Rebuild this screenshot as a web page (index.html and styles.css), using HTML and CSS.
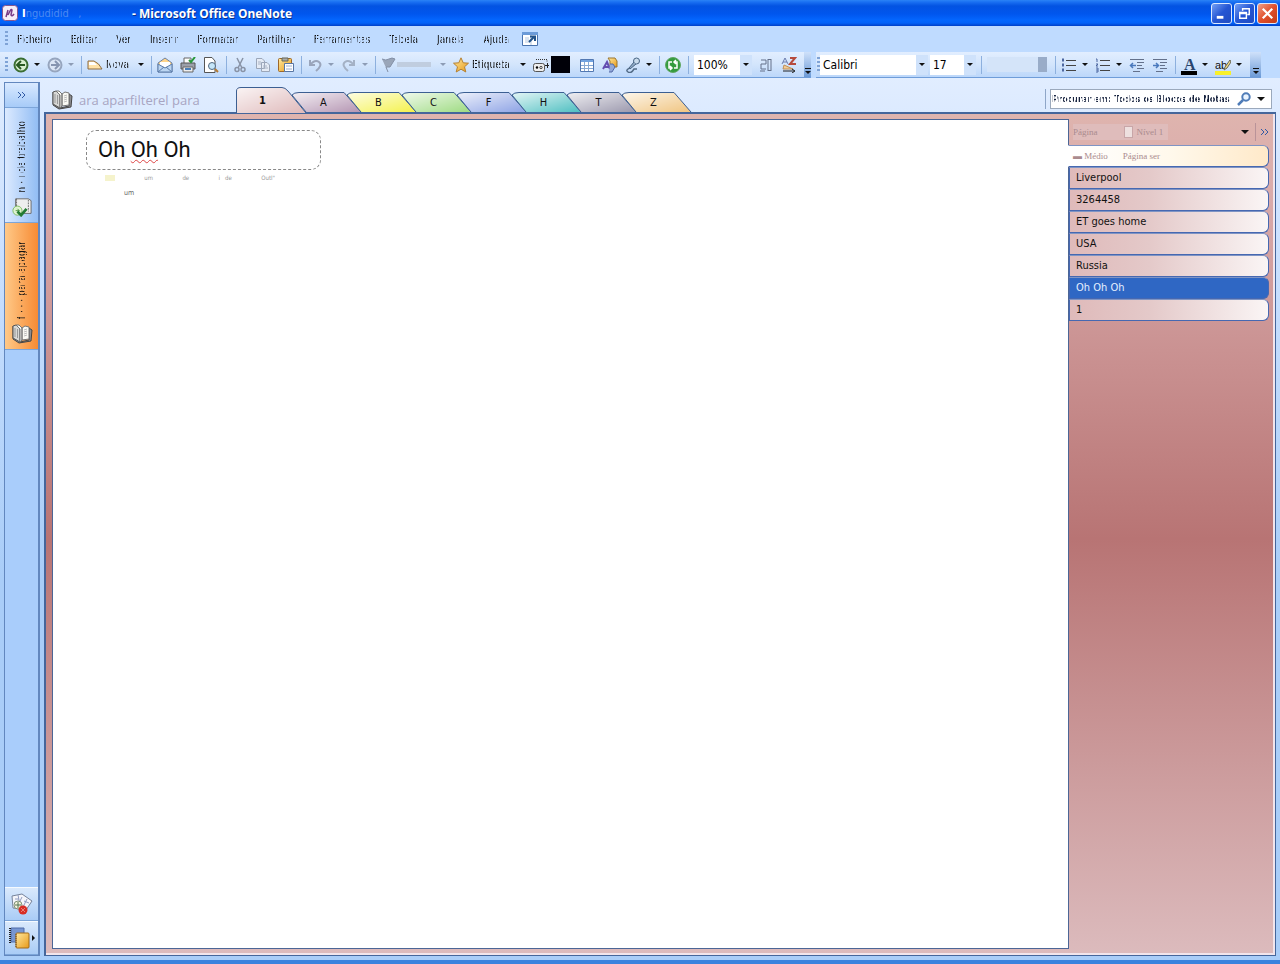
FILE: index.html
```html
<!DOCTYPE html>
<html lang="pt">
<head>
  <meta charset="UTF-8" />
  <meta name="viewport" content="width=device-width, initial-scale=1" />
  <title>Microsoft Office OneNote</title>
  <link rel="stylesheet" href="styles.css">
</head>
<body>

  <!-- shared icons -->
  <svg class="sprite" aria-hidden="true">
    <defs>
      <linearGradient id="shine" x1="0" y1="0" x2="1" y2="1">
        <stop offset="0" stop-color="#fff" stop-opacity=".85" />
        <stop offset="1" stop-color="#fff" stop-opacity="0" />
      </linearGradient>
      <linearGradient id="gold" x1="0" y1="0" x2="1" y2="1">
        <stop offset="0" stop-color="#ffe9a0" />
        <stop offset="1" stop-color="#e89a18" />
      </linearGradient>
    </defs>
    <symbol id="tab" viewBox="0 0 71 20">
      <path d="M15 20 1 3Q3 .5 8 .5H53L70 20Z" fill="var(--tab)" />
      <path d="M15 20 1 3Q3 .5 8 .5H53L70 20" fill="url(#shine)" stroke="#3c5f92" />
    </symbol>
    <symbol id="book" viewBox="0 0 22 20">
      <path d="M2 2V15L8 19 20 17 21 6 18 4V16L9 18" fill="#8d8d90" stroke="#444" />
      <path d="M2 2 5 1 9 5V18L2 14Z" fill="#d8d8d6" stroke="#555" />
      <path d="M5 1 9 5V18L11 16V4L8 1ZM11 4 14 2 18 3V15L11 16Z" fill="#fafaf4" stroke="#777" />
      <path d="M13 6 16 5M13 8 16 7M13 10 16 9M13 12 16 11" stroke="#bbb" />
      <path d="M4 4V13M6.500 5V14" stroke="#999" />
    </symbol>
  </svg>

  <header class="titlebar">
    <svg class="logo" viewBox="0 0 16 16"><rect width="15" height="15" x=".5" y=".5" rx="3" fill="#f5eef8" stroke="#88588e" /><path d="M4 12 6 5M6 10Q9 3 10 5L9 10Q10 12 12 9" fill="none" stroke="#793c88" stroke-width="1.500" /></svg>
    <span class="doc">I<span class="faded">ngudidid &nbsp; ,</span></span>
    <h1>- Microsoft Office OneNote</h1>
    <div class="window-buttons">
      <button aria-label="Minimizar"><svg viewBox="0 0 20 20"><path d="M5 14H12" stroke="#fff" stroke-width="3" /></svg></button>
      <button aria-label="Restaurar"><svg viewBox="0 0 20 20"><path d="M8 7V5H15V11H13M5 9H12V15H5ZM5 10H12M8 5H15" fill="none" stroke="#fff" stroke-width="1.500" /></svg></button>
      <button class="close" aria-label="Fechar"><svg viewBox="0 0 20 20"><path d="M5 5 15 15M15 5 5 15" stroke="#fff" stroke-width="2.300" /></svg></button>
    </div>
  </header>

  <nav class="menubar">
    <i class="grip"></i>
    <a href="#" class="worn">Ficheiro</a>
    <a href="#" class="worn">Editar</a>
    <a href="#" class="worn">Ver</a>
    <a href="#" class="worn">Inserir</a>
    <a href="#" class="worn">Formatar</a>
    <a href="#" class="worn">Partilhar</a>
    <a href="#" class="worn">Ferramentas</a>
    <a href="#" class="worn">Tabela</a>
    <a href="#" class="worn">Janela</a>
    <a href="#" class="worn">Ajuda</a>
    <button aria-label="Ecrã inteiro"><svg viewBox="0 0 16 16"><path d="M.5 1.500H15.500V14.500H.5Z" fill="#fff" stroke="#4a73ad" /><path d="M0 1H16V4H0Z" fill="#6c9bd8" /><path d="M3 7H7M3 9H7M3 11H8M9 4V14" stroke="#b7c8df" /><path d="M7 11 12 6M8 5.500H13V10" fill="none" stroke="#245489" stroke-width="2" /></svg></button>
  </nav>

  <div class="toolbars">
    <div class="toolbar standard">
      <i class="grip"></i>
      <button class="tool drop" aria-label="Anterior"><svg viewBox="0 0 16 16"><circle cx="8" cy="8" r="6.500" fill="#d9efd0" stroke="#3b6e32" stroke-width="2" /><path d="M12 8H5M8 4 4 8 8 12" fill="none" stroke="#285a22" stroke-width="2" /></svg></button>
      <button class="tool drop off" aria-label="Seguinte"><svg viewBox="0 0 16 16"><circle cx="8" cy="8" r="6.500" fill="#dce6f5" stroke="#96a5be" stroke-width="2" /><path d="M4 8H11M8 4 12 8 8 12" fill="none" stroke="#8795b0" stroke-width="2" /></svg></button>
      <i class="sep"></i>
      <button class="tool drop new"><svg viewBox="0 0 16 16"><path d="M1 12V4H7Q12 6 15 12Z" fill="#ffe2a8" stroke="#8b6a42" /><path d="M2 5H7L10 8H2Z" fill="#fff" /></svg><span class="worn">Nova</span></button>
      <i class="sep"></i>
      <button class="tool" aria-label="Correio"><svg viewBox="0 0 16 16"><path d="M1 6 8 1 15 6V15H1Z" fill="#ffd58b" stroke="#6e82a4" /><path d="M3 5H13V9L8 11 3 9Z" fill="#fff" /><path d="M1 7 8 11 15 7V15H1Z" fill="#bcd6f2" stroke="#5a7cab" /><path d="M1 15 7 10M15 15 9 10" stroke="#5a7cab" /></svg></button>
      <button class="tool" aria-label="Imprimir"><svg viewBox="0 0 16 16"><path d="M4 6V1H11V6" fill="#fff" stroke="#666" /><path d="M1 6H15V12H1Z" fill="#9ba0aa" stroke="#555" /><path d="M3 10H13V15H3Z" fill="#eee" stroke="#666" /><path d="M5 12H11" stroke="#487eb8" stroke-width="2" /><path d="M9 3 11 5 15 0" fill="none" stroke="#28993a" stroke-width="2" /></svg></button>
      <button class="tool" aria-label="Pré-visualizar"><svg viewBox="0 0 16 16"><path d="M1.500.5H9L12 4V15.500H1.500Z" fill="#fff" stroke="#555" /><circle cx="9" cy="9" r="3.500" fill="#c6e6f8" stroke="#516880" /><path d="M12 12 15 15" stroke="#b47a32" stroke-width="2" /></svg></button>
      <i class="sep"></i>
      <button class="tool" aria-label="Cortar"><svg viewBox="0 0 16 16"><path d="M5 1 10 11M11 1 6 11" stroke="#8993a6" stroke-width="1.500" /><circle cx="5" cy="12.500" r="2" fill="none" stroke="#8993a6" stroke-width="1.500" /><circle cx="11" cy="12.500" r="2" fill="none" stroke="#8993a6" stroke-width="1.500" /></svg></button>
      <button class="tool" aria-label="Copiar"><svg viewBox="0 0 16 16"><path d="M1.500 1.500H7L9.500 4V11.500H1.500ZM6.500 5.500H12L14.500 8V14.500H6.500Z" fill="#e5ebf5" stroke="#9ba6b9" /><path d="M3 5H6M3 7H6M8 9H12M8 11H13" stroke="#a9b3c4" /></svg></button>
      <button class="tool" aria-label="Colar"><svg viewBox="0 0 16 16"><rect x=".5" y="1.500" width="13" height="13" rx="1" fill="url(#gold)" stroke="#9d682a" /><path d="M4 1H10V4H4Z" fill="#aaa" stroke="#665" /><path d="M6.500 6.500H15.500V14.500H6.500Z" fill="#fff" stroke="#5876a4" /><path d="M8 9H14M8 12H14" stroke="#9caed0" /></svg></button>
      <i class="sep"></i>
      <button class="tool drop off" aria-label="Anular"><svg viewBox="0 0 16 16"><path d="M3 3V8H8M3 8Q8 2 12 5T9 14" fill="none" stroke="#9aa5bb" stroke-width="2" /></svg></button>
      <button class="tool drop off" aria-label="Refazer"><svg viewBox="0 0 16 16"><path d="M13 3V8H8M13 8Q8 2 4 5T7 14" fill="none" stroke="#a4b1c5" stroke-width="2" /></svg></button>
      <i class="sep"></i>
      <button class="tool drop off flag" aria-label="Sinalizador"><svg viewBox="0 0 16 16"><path d="M1 2Q5 4 8 2T14 2L9 10 5 10 7 15" fill="#99a5b8" stroke="#8490a6" /></svg><i class="smear"></i></button>
      <button class="tool drop tag"><svg viewBox="0 0 16 16"><path d="M8 .8 10.200 5.800 15.500 6.200 11.500 9.800 12.800 15 8 12.200 3.200 15 4.500 9.800 .5 6.200 5.800 5.800Z" fill="url(#gold)" stroke="#b58132" /></svg><span class="worn">Etiqueta</span></button>
      <button class="tool record" aria-label="Gravar"><svg viewBox="0 0 16 16"><path d="M3 2.500H14V5" fill="none" stroke="#333" stroke-dasharray="1 1" /><rect x=".5" y="6.500" width="11" height="8" rx="2" fill="#eee" stroke="#555" /><circle cx="4" cy="10.500" r="1.200" /><circle cx="8" cy="10.500" r="1.200" fill="none" stroke="#444" /><path d="M12 8.500H16M14.500 6V11" stroke="#222" /></svg><i class="block"></i></button>
      <button class="tool" aria-label="Tabela"><svg viewBox="0 0 16 16"><path d="M1.500 2.500H14.500V14.500H1.500Z" fill="#fff" stroke="#5278b2" /><path d="M2 3H14V5H2Z" fill="#73a3df" /><path d="M2 8.500H14M2 11.500H14M5.500 5V14M9.500 5V14" stroke="#88a9d3" /></svg></button>
      <button class="tool" aria-label="Desenho"><svg viewBox="0 0 16 16"><path d="M6 1H13L15 4V10H8V4Z" fill="url(#gold)" stroke="#9b7730" /><path d="M1 12 5 5 8 12M2 10H8" fill="none" stroke="#654eb0" stroke-width="2" /><path d="M8 7H11L13 10 10 15H7" fill="#91a7d8" stroke="#5268a6" /></svg></button>
      <button class="tool drop" aria-label="Áudio"><svg viewBox="0 0 16 16"><circle cx="11.500" cy="4" r="3" fill="#c9dbec" stroke="#486483" /><path d="M9 5 4 11 5 12 11 7" fill="#8fa9c4" stroke="#486483" /><path d="M5 11Q0 13 3 15T9 12L12 12" fill="none" stroke="#536c87" stroke-width="1.500" /></svg></button>
      <i class="sep"></i>
      <button class="tool" aria-label="Sincronizar"><svg viewBox="0 0 16 16"><circle cx="8" cy="8" r="7.500" fill="#349b3e" stroke="#62a764" /><path d="M7 5H4V11H7M5 9 7 11 5 13M9 11H12V5H9M11 3 9 5 11 7" fill="none" stroke="#fff" stroke-width="1.500" /></svg></button>
      <i class="sep"></i>
      <label class="combo zoom"><select aria-label="Zoom"><option>100%</option></select></label>
      <button class="tool" aria-label="Painel"><svg viewBox="0 0 16 16"><path d="M3 3H8V7H3V12H8M10 2V14M13 2V14M2 14H7M10 13.500H13M10 2.500H13" fill="none" stroke="#65718a" /></svg></button>
      <button class="tool" aria-label="Ordenar"><svg viewBox="0 0 16 16"><path d="M1 7 4 1 7 7M2 5H6" fill="none" stroke="#6a7bad" /><path d="M9 1H14L9 7H15" fill="none" stroke="#b64b3d" stroke-width="2" /><path d="M3 8 12 12H2Z" fill="#f4cc95" stroke="#bd8e57" /><path d="M2 14H13M11 12 14 14 11 16" fill="none" stroke="#222" /></svg></button>
      <button class="more" aria-label="Mais botões"></button>
    </div>
    <div class="toolbar format">
      <i class="grip"></i>
      <label class="combo font"><select aria-label="Tipo de letra"><option>Calibri</option></select></label>
      <label class="combo size"><select aria-label="Tamanho"><option>17</option></select></label>
      <i class="sep"></i>
      <i class="erased"></i>
      <i class="sep"></i>
      <button class="tool drop" aria-label="Marcas"><svg viewBox="0 0 16 16"><path d="M1 3H3M1 8H3M1 13H3" stroke="#4d67a0" stroke-width="3" /><path d="M5 3.500H15M5 8.500H15M5 13.500H15" stroke="#444" /></svg></button>
      <button class="tool drop" aria-label="Numeração"><svg viewBox="0 0 16 16"><path d="M1 2H2V5M1 7H3L1 9H3M1 11H3V15H1M1 13H3" fill="none" stroke="#4d67a0" /><path d="M5 3.500H15M5 8.500H15M5 13.500H15" stroke="#444" /></svg></button>
      <button class="tool" aria-label="Diminuir avanço"><svg viewBox="0 0 16 16"><path d="M1 2.500H15M8 5.500H15M8 8.500H13M8 11.500H15M4 14.500H11" stroke="#64718b" /><path d="M7 8.500H2M4 6 1.500 8.500 4 11" fill="none" stroke="#4a79bd" stroke-width="1.500" /></svg></button>
      <button class="tool" aria-label="Aumentar avanço"><svg viewBox="0 0 16 16"><path d="M1 2.500H15M8 5.500H15M8 8.500H13M8 11.500H15M4 14.500H11" stroke="#64718b" /><path d="M1 8.500H6M4 6 6.500 8.500 4 11" fill="none" stroke="#4a79bd" stroke-width="1.500" /></svg></button>
      <i class="sep"></i>
      <button class="tool drop letter">A</button>
      <button class="tool drop marker">ab<svg viewBox="0 0 8 12"><path d="M7 1 2 8 1 11 4 9 8 3Z" fill="#f4db82" stroke="#665" /></svg></button>
      <button class="more" aria-label="Mais botões"></button>
    </div>
  </div>

  <main>
    <aside class="notebooks">
      <button class="expand" aria-label="Expandir"><svg class="chevrons" viewBox="0 0 9 8"><path d="M1 1 4 4 1 7M5 1 8 4 5 7" /></svg></button>
      <button class="notebook"><span class="worn">n · ı de trabalho</span>
        <svg viewBox="0 0 22 22"><path d="M4 2H18L21 4V18H8L4 15Z" fill="#eee" stroke="#666" /><path d="M5 2V15M18 3V16" stroke="#666" stroke-dasharray="2 1" /><circle cx="6" cy="15" r="5" fill="#dff3d1" stroke="#78b85a" /><path d="M4 15H8M6 13 8 15 6 17" fill="none" stroke="#519341" /><path d="M6 16 10 20 16 13" fill="none" stroke="#237b32" stroke-width="3" /></svg>
      </button>
      <button class="notebook current"><span class="worn">f · · · para apagar</span><svg><use href="#book" /></svg></button>
      <div class="spacer"></div>
      <button class="shortcut" aria-label="Notas por arquivar"><svg viewBox="0 0 24 22"><path d="M2 3 12 1 22 8 16 17 3 15Z" fill="#f4f5fa" stroke="#77849b" /><path d="M8 2 10 12M12 4 9 10M17 6 13 14M5 6H9M14 8 19 10" stroke="#909cc0" /><circle cx="8" cy="12" r="4" fill="#f4f3dc" stroke="#809279" /><path d="M8 9V15M5 12H11" stroke="#527552" /><circle cx="13" cy="17" r="4.500" fill="#d82d24" /><path d="M11 15 15 19M15 15 11 19" stroke="#fff" stroke-opacity=".4" /></svg></button>
      <button class="shortcut" aria-label="Todos os blocos"><svg viewBox="0 0 24 22"><path d="M3 1H16V15H3Z" fill="#7796d2" stroke="#516da8" /><path d="M2 1V17" stroke="#222" stroke-width="2" stroke-dasharray="1 1" /><rect x="8" y="6" width="13" height="15" rx="1" fill="url(#gold)" stroke="#a36b18" /><path d="M8 7V21" stroke="#6c4a1a" stroke-dasharray="1 1" /></svg><i class="side-arrow"></i></button>
    </aside>

    <div class="content">
      <div class="sections">
        <svg class="book"><use href="#book" /></svg>
        <span class="notebook-name">ara aparfilterel para</span>
        <nav class="tabs">
          <a href="#" class="tab active"><svg viewBox="0 0 71 26"><path d="M.5 26V4Q.5 .5 5 .5H46Q49 .5 52 4L70 26" fill="#dfb9ba" /><path d="M.5 26V4Q.5 .5 5 .5H46Q49 .5 52 4L70 26" fill="url(#shine)" stroke="#3c5f92" /></svg><span>1</span></a>
          <a href="#" class="tab mauve"><svg><use href="#tab" /></svg><span>A</span></a>
          <a href="#" class="tab yellow"><svg><use href="#tab" /></svg><span>B</span></a>
          <a href="#" class="tab green"><svg><use href="#tab" /></svg><span>C</span></a>
          <a href="#" class="tab blue"><svg><use href="#tab" /></svg><span>F</span></a>
          <a href="#" class="tab teal"><svg><use href="#tab" /></svg><span>H</span></a>
          <a href="#" class="tab grey"><svg><use href="#tab" /></svg><span>T</span></a>
          <a href="#" class="tab orange"><svg><use href="#tab" /></svg><span>Z</span></a>
        </nav>
        <i class="divider"></i>
        <div class="search">
          <input type="text" class="worn" aria-label="Procurar" value="Procurar em: Todos os Blocos de Notas">
          <button aria-label="Procurar"><svg viewBox="0 0 14 14"><circle cx="9" cy="5" r="3.700" fill="#eaf4ff" stroke="#4f7cb8" stroke-width="2" /><path d="M6 8 1 13" stroke="#4f7cb8" stroke-width="2.500" /></svg></button>
          <button class="arrow" aria-label="Âmbito"></button>
        </div>
      </div>

      <div class="section-body">
        <article class="page">
          <h2>Oh <span class="misspelt">Oh</span> Oh</h2>
          <div class="stamp"><i></i><span>um</span><span>de</span><span>i &nbsp; de</span><span>Outl"</span></div>
          <p>um</p>
        </article>
        <aside class="pages">
          <div class="pages-head">
            <div class="patch"><span class="ghost">Página</span><i class="sheet"></i><span class="ghost">Nível 1</span></div>
            <button class="arrow" aria-label="Opções"></button>
            <button class="collapse" aria-label="Fechar painel"><svg class="chevrons" viewBox="0 0 9 8"><path d="M1 1 4 4 1 7M5 1 8 4 5 7" /></svg></button>
          </div>
          <a href="#" class="page-tab untitled"><span class="ghost">▬ Médio</span><span class="ghost">Página ser</span></a>
          <a href="#" class="page-tab">Liverpool</a>
          <a href="#" class="page-tab">3264458</a>
          <a href="#" class="page-tab">ET goes home</a>
          <a href="#" class="page-tab">USA</a>
          <a href="#" class="page-tab">Russia</a>
          <a href="#" class="page-tab selected">Oh Oh Oh</a>
          <a href="#" class="page-tab">1</a>
        </aside>
      </div>
    </div>
  </main>

</body>
</html>
```
FILE: styles.css
```css
* {
  box-sizing: border-box;
}

body {
  margin: 0;
  min-height: 100vh;
  display: flex;
  flex-direction: column;
  font-family: "DejaVu Sans Condensed", "DejaVu Sans", sans-serif;
  font-size: 11px;
  color: #111;
  background: #a9cdf8;
  border-bottom: 4px solid #3b82de;
}

button {
  padding: 0;
  border: 0;
  background: none;
  font: inherit;
  color: inherit;
}

a {
  color: inherit;
  text-decoration: none;
}

svg {
  display: block;
  flex: none;
}

.sprite {
  position: absolute;
  width: 0;
  height: 0;
}

/* thin, half-rubbed-out lettering */
.worn {
  -webkit-mask-image: repeating-linear-gradient(90deg, #000 0 2px, transparent 2px 3px);
  mask-image: repeating-linear-gradient(90deg, #000 0 2px, transparent 2px 3px);
}

/* title bar */
.titlebar {
  height: 26px;
  display: flex;
  align-items: center;
  padding: 0 2px;
  color: #fff;
  background: linear-gradient(#2b83f6 0, #1a70f2 2px, #0353e2 6px, #0056ee 14px, #0366fe 20px, #0262f8 23px, #003fc8 26px);
}

.logo {
  width: 16px;
  height: 16px;
}

.doc {
  width: 114px;
  padding-left: 4px;
  font-weight: bold;
}

.faded {
  color: #4b8af3;
  font-weight: normal;
}

h1 {
  flex: 1;
  margin: 0;
  font: bold 12px "Noto Sans", sans-serif;
  text-shadow: 1px 1px #0a318c;
}

.window-buttons {
  display: flex;
  gap: 2px;
}

.window-buttons button {
  width: 21px;
  height: 21px;
  border: 1px solid #dce9ff;
  border-radius: 3px;
  background: linear-gradient(135deg, #739ff5, #2455d3 50%, #204bc0);
}

.window-buttons .close {
  background: linear-gradient(135deg, #f0a088, #e1502c 50%, #c33b18);
}

/* menus */
.menubar {
  height: 26px;
  display: flex;
  align-items: center;
  gap: 19px;
  padding-left: 5px;
  background: #bfdbff;
}

.menubar .grip {
  margin-right: -10px;
}

.menubar a {
  font-size: 10px;
}

.menubar svg {
  width: 16px;
  height: 16px;
  margin-left: -6px;
}

.grip {
  flex: none;
  width: 3px;
  height: 16px;
  background: repeating-linear-gradient(#7fa3d6 0 2px, transparent 2px 4px);
}

/* toolbars */
.toolbars {
  height: 26px;
  display: flex;
  gap: 5px;
  background: #bfdbff;
}

.toolbar {
  display: flex;
  align-items: center;
  border-bottom: 1px solid #6f9dd9;
  background: linear-gradient(#e2eeff, #d3e5fc 50%, #bcd7fa);
}

.standard {
  width: 811px;
  padding-left: 5px;
}

.format {
  width: 445px;
  padding-left: 1px;
}

.standard .grip {
  margin-right: 5px;
}

.tool {
  flex: none;
  width: 23px;
  height: 20px;
  display: flex;
  align-items: center;
}

.tool svg {
  width: 16px;
  height: 16px;
}

.drop {
  width: 34px;
}

.drop::after,
.combo::after,
.arrow::after {
  content: "";
  border: 3px solid transparent;
  border-top-color: #111;
  border-bottom: 0;
}

.drop::after {
  margin-left: auto;
  margin-right: 7px;
}

.off::after {
  border-top-color: #8d9cb5;
}

.new {
  width: 64px;
}

.tag {
  width: 80px;
}

.flag {
  width: 72px;
}

.tool span {
  margin-left: 3px;
  font-size: 10px;
}

.smear {
  width: 34px;
  height: 5px;
  background: #c0cddf;
}

.record {
  width: 46px;
  gap: 2px;
}

.block {
  width: 19px;
  height: 17px;
  background: #000008;
}

.sep {
  flex: none;
  width: 1px;
  height: 18px;
  margin-right: 5px;
  background: #8db0de;
}

.combo {
  flex: none;
  height: 20px;
  display: flex;
  align-items: center;
  margin-right: 2px;
  padding-right: 3px;
  background: linear-gradient(90deg, #fff calc(100% - 12px), #cfe2fb calc(100% - 12px));
}

.combo select {
  flex: 1;
  min-width: 0;
  padding: 0 3px;
  appearance: none;
  border: 0;
  background: none;
  font: inherit;
  font-size: 12px;
}

.zoom {
  width: 58px;
  margin-right: 6px;
}

.font {
  width: 108px;
}

.size {
  width: 46px;
  margin-right: 5px;
}

.erased {
  width: 60px;
  height: 15px;
  margin-right: 8px;
  border-right: 9px solid #99acc8;
  background: #d4e4f9;
}

.letter,
.tool.marker {
  position: relative;
  font: bold 16px "Liberation Serif", serif;
  color: #29456f;
}

.letter {
  padding-left: 3px;
}

.tool.marker {
  font: 11px "Liberation Sans", sans-serif;
  color: #111;
}

.letter::before,
.marker::before {
  content: "";
  position: absolute;
  left: 0;
  bottom: 0;
  width: 16px;
  height: 4px;
  background: #000;
}

.marker::before {
  background: #f8f02c;
}

.marker svg {
  width: 8px;
  height: 12px;
  margin-left: -4px;
}

.more {
  width: 11px;
  height: 25px;
  margin-left: auto;
  display: flex;
  flex-direction: column;
  justify-content: flex-end;
  align-items: center;
  gap: 2px;
  padding-bottom: 3px;
  background: linear-gradient(#cfe1fa, #6d9bd7);
}

.more::before {
  content: "";
  width: 6px;
  height: 1px;
  background: #111;
}

.more::after {
  content: "";
  border: 3px solid transparent;
  border-top-color: #111;
  border-bottom: 0;
}

/* notebook bar */
main {
  flex: 1;
  display: flex;
  padding: 0 4px 4px;
  background: linear-gradient(#e1edff, #cfe3ff 130px, #a9cdf8 500px);
}

.notebooks {
  width: 36px;
  display: flex;
  flex-direction: column;
  margin: 4px 4px 0 0;
  border: 1px solid #6287be;
  border-right-width: 2px;
  background: #a9cdfb;
}

.notebooks button {
  display: flex;
  flex-direction: column;
  align-items: center;
  border-bottom: 1px solid #7ca5d9;
  background: linear-gradient(90deg, #dceaff, #92bdf4);
}

.notebooks .expand {
  height: 25px;
  justify-content: center;
  background: linear-gradient(#d9e9ff, #a7cbf8);
}

.chevrons {
  width: 9px;
  height: 8px;
  fill: none;
  stroke: #315aa5;
}

.notebooks .notebook {
  height: 115px;
  justify-content: flex-end;
  gap: 5px;
  padding-bottom: 5px;
}

.notebook span {
  writing-mode: vertical-rl;
  transform: rotate(180deg);
  font-size: 10px;
  white-space: nowrap;
  -webkit-mask-image: repeating-linear-gradient(#000 0 2px, transparent 2px 3px);
  mask-image: repeating-linear-gradient(#000 0 2px, transparent 2px 3px);
}

.notebook svg {
  width: 22px;
  height: 20px;
}

.notebooks .current {
  height: 127px;
  background: linear-gradient(90deg, #ffc988, #f78b34);
}

.spacer {
  flex: 1;
}

.notebooks .shortcut {
  height: 34px;
  flex-direction: row;
  justify-content: center;
  border-top: 1px solid #f5faff;
  background: linear-gradient(#d9e9fc, #a9ccf6);
}

.shortcut svg {
  width: 24px;
  height: 22px;
}

.side-arrow {
  border: 3px solid transparent;
  border-left-color: #111;
  border-right: 0;
}

/* section tabs */
.content {
  flex: 1;
  min-width: 0;
  display: flex;
  flex-direction: column;
}

.sections {
  height: 34px;
  display: flex;
  align-items: flex-end;
}

.book {
  width: 22px;
  height: 20px;
  margin: 0 6px 2px 7px;
}

.notebook-name {
  width: 157px;
  padding-bottom: 3px;
  font: 13px "Open Sans", sans-serif;
  color: #a8a5c2;
}

.tabs {
  flex: 1;
  display: flex;
  align-items: flex-end;
}

.tab {
  position: relative;
  width: 71px;
  height: 20px;
  margin-right: -16px;
}

.tab svg {
  width: 71px;
  height: 20px;
}

.tab span {
  position: absolute;
  top: 4px;
  left: 0;
  width: 65px;
  text-align: center;
}

.tab.active,
.active svg {
  height: 26px;
}

.active {
  z-index: 1;
  margin-bottom: -1px;
}

.active span {
  top: 7px;
  width: 53px;
  font-weight: bold;
}

.mauve { --tab: #b596b3; }
.yellow { --tab: #f4f24c; }
.green { --tab: #9edb82; }
.blue { --tab: #8ca2e5; }
.teal { --tab: #4ebfc1; }
.grey { --tab: #9b98ad; }
.orange { --tab: #f0c581; }

.divider {
  width: 1px;
  height: 20px;
  margin: 0 4px 3px 0;
  background: #8ea6c8;
}

.search {
  width: 222px;
  height: 20px;
  display: flex;
  align-items: center;
  margin: 0 4px 3px 0;
  border: 1px solid #9ba9bc;
  background: #fff;
}

.search input {
  flex: 1;
  min-width: 0;
  padding: 0 1px;
  border: 0;
  font: bold 9px "DejaVu Sans Condensed", sans-serif;
  color: #17233f;
}

.search svg {
  width: 14px;
  height: 14px;
}

.arrow {
  width: 20px;
  height: 18px;
  display: flex;
  align-items: center;
  justify-content: center;
}

.arrow::after {
  border-width: 4px 4px 0;
}

/* page and page list */
.section-body {
  flex: 1;
  display: flex;
  padding: 5px 0 6px 6px;
  border: 2px solid #45669b;
  border-right-width: 1px;
  border-bottom-width: 1px;
  box-shadow: inset -2px -2px #f1e5ec;
  background: linear-gradient(#dfb4ae, #d9abab 80px, #b87474 425px, #dcbbbd);
}

.page {
  flex: 1;
  min-width: 0;
  padding: 10px 33px;
  border: 1px solid #4c6696;
  background: #fff;
}

h2 {
  width: 235px;
  height: 40px;
  margin: 0;
  padding: 5px 11px;
  border: 1px dashed #888;
  border-radius: 10px;
  font: 22px/28px Roboto, sans-serif;
}

.misspelt {
  text-decoration: underline wavy #d44 1px;
  text-underline-offset: 2px;
}

.stamp {
  width: 170px;
  height: 6px;
  display: flex;
  justify-content: space-between;
  margin: 5px 0 0 19px;
  font-size: 6px;
  line-height: 6px;
  color: #999;
}

.stamp i {
  width: 10px;
  background: #f5f3cc;
}

.page p {
  margin: 8px 38px;
  font-size: 7px;
  color: #666;
}

.pages {
  width: 206px;
  padding-right: 6px;
}

.pages-head {
  height: 26px;
  display: flex;
  align-items: center;
  padding-left: 4px;
}

.patch {
  width: 95px;
  height: 16px;
  display: flex;
  align-items: center;
  background: #dfbcbb;
}

.ghost {
  font: 9px "Liberation Serif", serif;
  color: #aa8b8e;
}

.sheet {
  width: 9px;
  height: 12px;
  margin: 0 4px 0 26px;
  border: 1px solid #c8a6a8;
  background: #eee0df;
}

.pages-head .arrow {
  margin-left: auto;
}

.collapse {
  height: 18px;
  padding-left: 4px;
  border-left: 1px solid #b99399;
}

.page-tab {
  height: 22px;
  display: block;
  padding-left: 6px;
  border: 1px solid #4668b1;
  border-top-color: #7f94c4;
  border-radius: 0 6px 6px 0;
  line-height: 20px;
  background: linear-gradient(90deg, #dfbaba, #e4c9c9 40%, #faf5f5);
}

.untitled {
  display: flex;
  align-items: center;
  gap: 15px;
  padding-left: 4px;
  margin-left: -1px;
  border-left-color: #fff;
  background: linear-gradient(90deg, #fff, #fff9ec 50%, #ffe9c9);
}

.selected {
  color: #e4efff;
  background: #2f67c4;
}
```
